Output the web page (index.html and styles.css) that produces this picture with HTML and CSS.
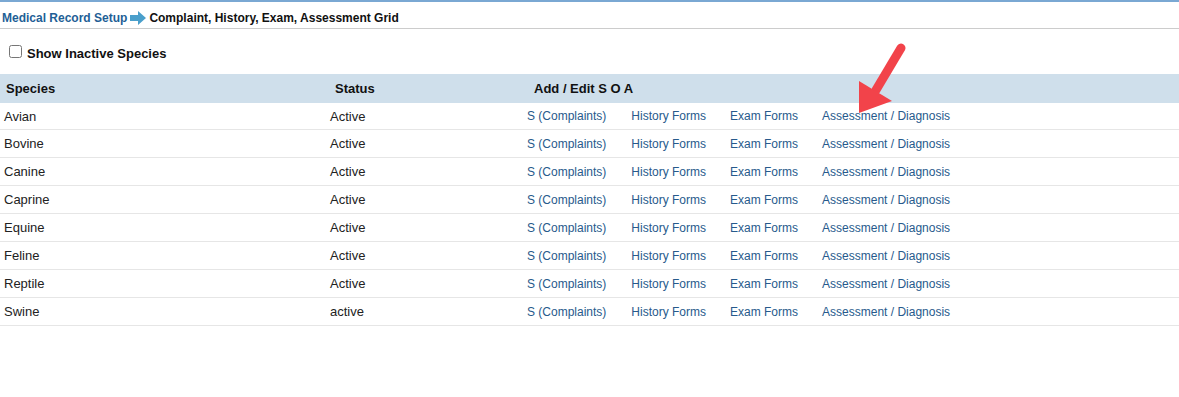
FILE: index.html
```html
<!DOCTYPE html>
<html lang="en">
<head>
    <meta charset="UTF-8">
    <title>Complaint, History, Exam, Assessment Grid</title>
    <link rel="stylesheet" href="styles.css">
</head>
<body>
    <div class="page">
        <div class="breadcrumb">
            <a href="#" class="crumb-link">Medical Record Setup</a>
            <svg class="crumb-arrow" width="16" height="14" viewBox="0 0 16 14">
                <path d="M0 4 H8 V0 L16 7 L8 14 V10 H0 Z" fill="#4a9fcb"/>
            </svg>
            <span class="crumb-current">Complaint, History, Exam, Assessment Grid</span>
        </div>

        <label class="filter">
            <input type="checkbox">
            <span>Show Inactive Species</span>
        </label>

        <table class="grid">
            <colgroup>
                <col class="col-species">
                <col class="col-status">
                <col>
            </colgroup>
            <thead>
                <tr>
                    <th class="th-species">Species</th>
                    <th class="th-status">Status</th>
                    <th class="th-soa">Add / Edit S O A</th>
                </tr>
            </thead>
            <tbody id="rows"></tbody>
        </table>

        <!-- annotation arrow -->
        <svg class="pointer" width="70" height="85" viewBox="0 0 70 85">
            <line x1="51" y1="9" x2="26" y2="51" stroke="#f2434a" stroke-width="9" stroke-linecap="round"/>
            <polygon points="9,42 42,62 9,74" fill="#f2434a"/>
        </svg>
    </div>

    <script>
        const species = [
            ['Avian', 'Active'],
            ['Bovine', 'Active'],
            ['Canine', 'Active'],
            ['Caprine', 'Active'],
            ['Equine', 'Active'],
            ['Feline', 'Active'],
            ['Reptile', 'Active'],
            ['Swine', 'active']
        ];
        const links = ['S (Complaints)', 'History Forms', 'Exam Forms', 'Assessment / Diagnosis'];
        const tbody = document.getElementById('rows');

        species.forEach(([name, status]) => {
            const tr = document.createElement('tr');
            tr.innerHTML = `
                <td>${name}</td>
                <td>${status}</td>
                <td><div class="soa-links">${links.map(l => `<a href="#">${l}</a>`).join('')}</div></td>`;
            tbody.appendChild(tr);
        });
    </script>
</body>
</html>
```

FILE: styles.css
```css
body {
    margin: 0;
    background: #ffffff;
    font-family: 'Liberation Sans', Arial, sans-serif;
    color: #222222;
}

.page {
    position: relative;
    border-top: 2px solid #7aa8d3;
}

.breadcrumb {
    display: flex;
    align-items: center;
    padding: 6px 2px 0;
    height: 20px;
    border-bottom: 1px solid #cccccc;
    font-size: 12px;
    font-weight: bold;
}

.crumb-link {
    color: #1f5f96;
    text-decoration: none;
}

.crumb-arrow {
    margin: 0 3px 0 3px;
}

.crumb-current {
    color: #111111;
}

.filter {
    display: flex;
    align-items: center;
    gap: 5px;
    margin: 16px 0 13px;
    padding-left: 9px;
    height: 16px;
    font-size: 13px;
    font-weight: bold;
    color: #111111;
}

.filter input {
    margin: 0 0 3px 0;
    width: 13px;
    height: 13px;
}

.grid {
    width: 100%;
    border-collapse: collapse;
    table-layout: fixed;
    font-size: 13px;
}

.col-species {
    width: 326px;
}

.col-status {
    width: 197px;
}

.grid th {
    height: 29px;
    padding: 0;
    background: #cfdfeb;
    text-align: left;
    font-weight: bold;
    color: #111111;
}

.th-species {
    padding-left: 6px !important;
}

.th-status {
    padding-left: 9px !important;
}

.th-soa {
    padding-left: 11px !important;
}

.grid td {
    height: 27px;
    padding: 0 0 0 4px;
    border-bottom: 1px solid #e6e6e6;
    color: #222222;
}

.grid tbody tr:first-child td {
    height: 26px;
}

.soa-links {
    display: flex;
    gap: 24px;
}

.soa-links a {
    font-size: 12px;
    color: #275a8c;
    text-decoration: none;
}

.soa-links a:first-child {
    margin-right: 1px;
}

.pointer {
    position: absolute;
    left: 850px;
    top: 37px;
}
```
